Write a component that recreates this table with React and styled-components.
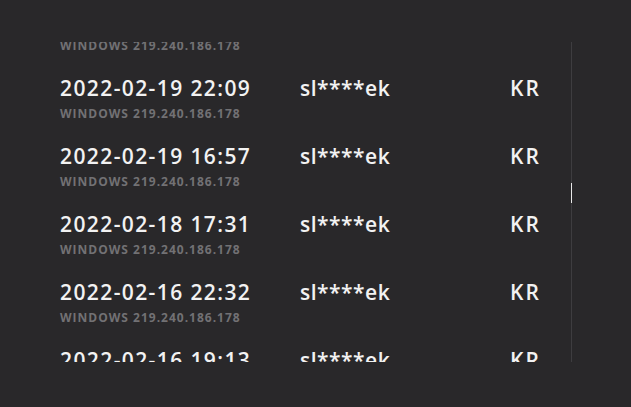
import styled, { createGlobalStyle } from 'styled-components'

const GlobalStyle = createGlobalStyle`
  html, body {
    margin: 0;
    padding: 0;
    background: #29282a;
  }
  body {
    font-family: "Open Sans", "Noto Sans", sans-serif;
  }
`

const logins = [
  { date: '2022-02-20 09:41', user: 'sl****ek', country: 'KR' },
  { date: '2022-02-19 22:09', user: 'sl****ek', country: 'KR' },
  { date: '2022-02-19 16:57', user: 'sl****ek', country: 'KR' },
  { date: '2022-02-18 17:31', user: 'sl****ek', country: 'KR' },
  { date: '2022-02-16 22:32', user: 'sl****ek', country: 'KR' },
  { date: '2022-02-16 19:13', user: 'sl****ek', country: 'KR' },
]

const Page = styled.div`
  width: 631px;
  height: 407px;
  padding-top: 42px;
  box-sizing: border-box;
`

const Viewport = styled.div`
  position: relative;
  width: 572px;
  height: 320px;
  overflow: hidden;
`

const List = styled.div`
  margin-top: -48px;
  padding-left: 60px;
`

const Row = styled.div`
  display: grid;
  grid-template-columns: 240px 210px 60px;
  height: 68px;
  padding-top: 12px;
  box-sizing: border-box;
`

const Cell = styled.div`
  color: #f2f2f2;
  font-size: 21px;
  font-weight: 600;
  line-height: 28px;
  letter-spacing: ${p => p.$spacing || 0}px;
  white-space: nowrap;
`

const Meta = styled.div`
  margin-top: 5px;
  color: #727174;
  font-size: 12px;
  font-weight: 700;
  line-height: 14px;
  letter-spacing: 1px;
  text-transform: uppercase;
  white-space: nowrap;
`

const Track = styled.div`
  position: absolute;
  top: 0;
  right: 0;
  width: 1px;
  height: 100%;
  background: #3e3d40;
`

const Thumb = styled.div`
  position: absolute;
  top: 141px;
  left: 0;
  width: 1px;
  height: 20px;
  background: #e8e8e8;
`

const App = () => {
  return (
    <>
      <GlobalStyle />
      <Page>
        <Viewport>
          <List>
            {logins.map((row, i) => (
              <Row key={i}>
                <div>
                  <Cell $spacing={1.4}>{row.date}</Cell>
                  <Meta>Windows 219.240.186.178</Meta>
                </div>
                <Cell $spacing={0.5}>{row.user}</Cell>
                <Cell $spacing={2}>{row.country}</Cell>
              </Row>
            ))}
          </List>
          <Track>
            <Thumb />
          </Track>
        </Viewport>
      </Page>
    </>
  )
}

export default App
